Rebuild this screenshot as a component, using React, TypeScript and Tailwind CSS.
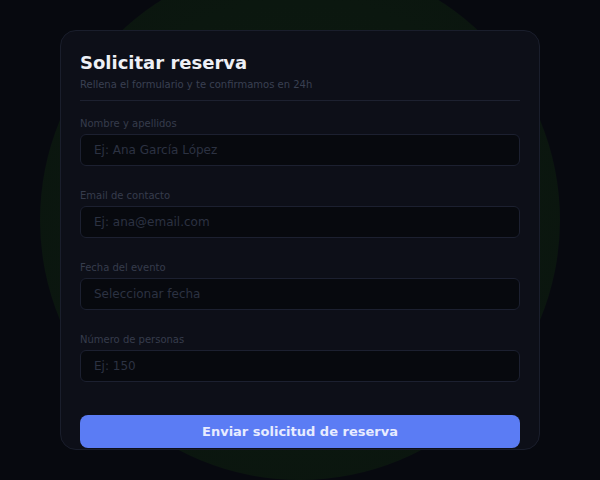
import React from 'react';

const fields = [
  { label: 'Nombre y apellidos', placeholder: 'Ej: Ana García López', type: 'text' },
  { label: 'Email de contacto', placeholder: 'Ej: ana@email.com', type: 'email' },
  { label: 'Fecha del evento', placeholder: 'Seleccionar fecha', type: 'text' },
  { label: 'Número de personas', placeholder: 'Ej: 150', type: 'text' },
];

const App: React.FC = () => {
  return (
    <div className="relative w-[600px] h-[480px] overflow-hidden bg-[#07090f] font-['DejaVu_Sans',sans-serif]">
      {/* background glow */}
      <div className="absolute left-[40px] top-[-40px] w-[520px] h-[520px] rounded-full bg-[radial-gradient(circle,#0c1a10_0%,#0b170f_60%,#0a130e_100%)]" />

      <div className="relative mx-auto mt-[30px] w-[480px] h-[420px] overflow-hidden rounded-2xl border border-[#1a1e2c] bg-[#0d0f18] px-[19px] pt-[18px]">
        <h1 className="text-[18px] leading-[28px] font-bold text-[#eef0f6]">Solicitar reserva</h1>
        <p className="text-[10px] leading-[15px] text-[#3a4052]">Rellena el formulario y te confirmamos en 24h</p>
        <div className="mt-[8px] h-px bg-[#1d2130]" />

        <form className="mt-[17px] flex flex-col gap-6" onSubmit={(e) => e.preventDefault()}>
          {fields.map((f) => (
            <label key={f.label} className="flex flex-col gap-1">
              <span className="text-[10px] leading-[12px] text-[#363c4c]">{f.label}</span>
              <input
                type={f.type}
                placeholder={f.placeholder}
                className="h-8 w-full rounded-md border border-[#1c2030] bg-[#07090e] px-[13px] text-[12px] text-[#c8ccd8] placeholder:text-[#2c3242] outline-none"
              />
            </label>
          ))}

          <button
            type="submit"
            className="mt-[9px] h-[33px] w-full rounded-lg bg-[#5b7cf4] text-[13px] font-bold text-[#e8ecff]"
          >
            Enviar solicitud de reserva
          </button>
        </form>
      </div>
    </div>
  );
};

export default App;
